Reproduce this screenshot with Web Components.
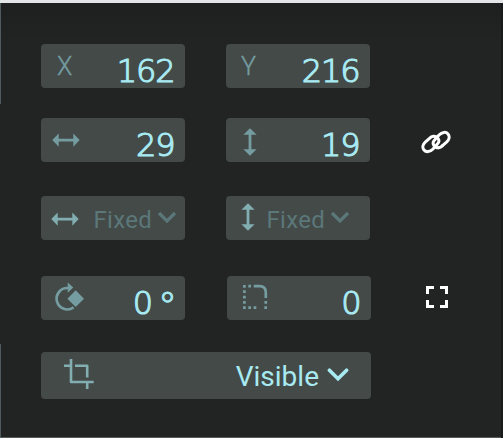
<!DOCTYPE html>
<html lang="en"><head><meta charset="utf-8"><title>Properties</title>
<style>html,body{margin:0;background:#222423}</style></head>
<body>
<property-panel></property-panel>
<script>
const icons = {
  none: '',
  width: '<path fill="currentColor" d="M11.300 22.100l6.400-6.600v5.200h14.600v-5.200l6.400 6.600-6.400 6.600v-5.200H17.700v5.200z"/>',
  height: '<path fill="currentColor" d="M24 10.300l6.600 6.400h-5.200v14.600h5.200l-6.600 6.400-6.600-6.400h5.200V16.700h-5.200z"/>',
  rotate: '<path fill="none" stroke="currentColor" stroke-width="2.700" d="M27.500 12.100A10.700 10.700 0 1 0 32.600 31.400"/><path fill="currentColor" d="M26.700 6.500l5.600 5-5.600 5.200zM34.700 14.300l8.300 8.400-8.300 8.400-8.300-8.400z"/>',
  radius: '<g fill="none" stroke="currentColor" stroke-width="2.700"><path stroke-dasharray="2.700 2.640" d="M17.400 9V34M21.300 10.200H25M21.300 31.700H30M37.300 31.700H40.200M38.800 25V29"/><path d="M26.700 10.200H32.500Q38.800 10.200 38.800 16.500V22"/></g>',
  crop: '<path fill="none" stroke="currentColor" stroke-width="2.600" stroke-linejoin="round" d="M30 7V30H52.700M23 13.800H30M34 13.800H46.200V25.500M46.200 30V37"/>'
};
const define = (name, html) => {
  const t = document.createElement('template'); t.innerHTML = html;
  customElements.define(name, class extends HTMLElement {
    connectedCallback() {
      if (this.shadowRoot) return;
      this.attachShadow({mode:'open'}).append(t.content.cloneNode(true));
      const art = this.shadowRoot.querySelector('[data-art]');
      if (art) art.innerHTML = icons[this.getAttribute('icon') || 'none'];
    }
  });
};
define('property-field', `<style>
:host{display:flex;box-sizing:border-box;width:144px;height:44px;border-radius:4px;background:#434a48;color:#759ca0}
:host([wide]){width:330px;height:47px}
svg{flex:none;width:54px;height:44px;margin-right:-54px}
:host([bright]) svg{color:#82adb1}
:host([icon=width][bright]) svg{transform:translate(-1px,1px)}
:host([icon=height][bright]) svg{transform:translate(-2px,-3px)}
.content{flex:1;display:flex;justify-content:flex-end;align-items:center}
</style><svg data-art viewBox="0 0 54 44"></svg><div class="content"><slot></slot></div>`);
define('axis-label', `<style>:host{display:block;flex:1;padding-left:16px;font:300 25px/44px Roboto,sans-serif;color:#759ca0;-webkit-text-stroke:.350px}
:host([tight]){padding-left:15px}
span{display:inline-block;transform:translateY(.5px)}</style><span><slot></slot></span>`);
define('number-value', `<style>:host{display:flex;padding:9px 10.500px 0 0;font:200 32px/44px "DejaVu Sans",sans-serif;letter-spacing:-1.100px;color:#a8eaf2;-webkit-text-stroke:1.150px;white-space:pre}
::slotted(span){font-size:38px;word-spacing:-6px;letter-spacing:0;margin-right:-2.500px;transform:translateY(3px);-webkit-text-stroke:1px}</style><slot></slot>`);
define('select-value', `<style>:host{display:flex;align-items:center;gap:5px;padding:1px 8px 0 0;font:24px/40px Roboto,sans-serif;letter-spacing:.300px;color:#5b7779}
:host([vertical]){padding-right:20px}
:host([active]){gap:8px;padding:3px 22px 0 0;font-size:28px;letter-spacing:0;color:#a8eaf2}
svg{width:20px;height:14px;margin-top:-3px;fill:none;stroke:currentColor;stroke-width:3.200}
:host([active]) svg{width:22px;height:15px;margin-top:-5px;stroke-width:3.400;stroke-linecap:round}
span{display:block;white-space:nowrap;padding-top:3px}
:host([active]) span{padding-top:0}
</style><span><slot></slot></span><svg viewBox="0 0 20 14"><path d="M2 3l8 8 8-8"/></svg>`);
define('link-icon', `<style>:host,svg{display:block;width:30px;height:24px}</style><svg viewBox="0 0 30 24" fill="none" stroke="#fff" stroke-width="3" stroke-linecap="round"><path d="M17.700 17.700C13.500 18 10.500 13.500 13.200 10.500L18 5C21 1.800 25 1.600 27 4C29 6.500 28.200 9.800 25.500 12.200L21.500 15.600"/><path d="M12.300 6.300C16.500 6 19.500 10.500 16.800 13.500L12 19C9 22.200 5 22.400 3 20C1 17.500 1.800 14.200 4.500 11.800L8.500 8.400Q10.300 6.500 12.300 6.300M17.700 17.700Q19.700 17.500 21.500 15.600"/></svg>`);
define('expand-icon', `<style>:host,svg{display:block;width:22px;height:22px}</style><svg viewBox="0 0 22 22" fill="none" stroke="#fff" stroke-width="3"><path d="M8 1.500H1.500V8M14 1.500H20.500V8M8 20.500H1.500V14M14 20.500H20.500V14"/></svg>`);
define('property-row', `<style>:host{display:grid;grid-template-columns:144px 144px auto;column-gap:41px;height:44px;align-items:center}
:host([offset]){grid-template-columns:145px 144px auto}
:host([full]){grid-template-columns:330px;height:47px}</style><slot></slot>`);
define('property-panel', `<style>
:host{display:block;box-sizing:border-box;width:503px;height:438px;padding:41px 0 0 41px;border-top:3px solid #e3e5e7;
background:linear-gradient(#4f5b5c,#4f5b5c) 0 0/1px 101px no-repeat,linear-gradient(#4f5b5c,#4f5b5c) 0 341px/1px 94px no-repeat,linear-gradient(#191a1a,#191a1a) 100% 0/2px 100% no-repeat,linear-gradient(#555c5a,#555c5a) 0 100%/501px 1px no-repeat,linear-gradient(#1e201f,#222423 40px)}
property-row:nth-of-type(2){margin-top:30px}
property-row:nth-of-type(3){margin-top:34px}
property-row:nth-of-type(4){margin-top:36px}
property-row:nth-of-type(5){margin-top:32px}
link-icon{margin:3px 0 0 10px}
expand-icon{margin:-2px 0 0 14px}
</style>
<property-row><property-field><axis-label>X</axis-label><number-value>162</number-value></property-field><property-field><axis-label tight>Y</axis-label><number-value>216</number-value></property-field></property-row>
<property-row><property-field icon="width"><number-value>29</number-value></property-field><property-field icon="height"><number-value>19</number-value></property-field><link-icon></link-icon></property-row>
<property-row><property-field icon="width" bright><select-value>Fixed</select-value></property-field><property-field icon="height" bright><select-value vertical>Fixed</select-value></property-field></property-row>
<property-row offset><property-field icon="rotate"><number-value>0<span> °</span></number-value></property-field><property-field icon="radius"><number-value>0</number-value></property-field><expand-icon></expand-icon></property-row>
<property-row full><property-field icon="crop" wide bright><select-value active>Visible</select-value></property-field></property-row>`);
</script></body></html>
